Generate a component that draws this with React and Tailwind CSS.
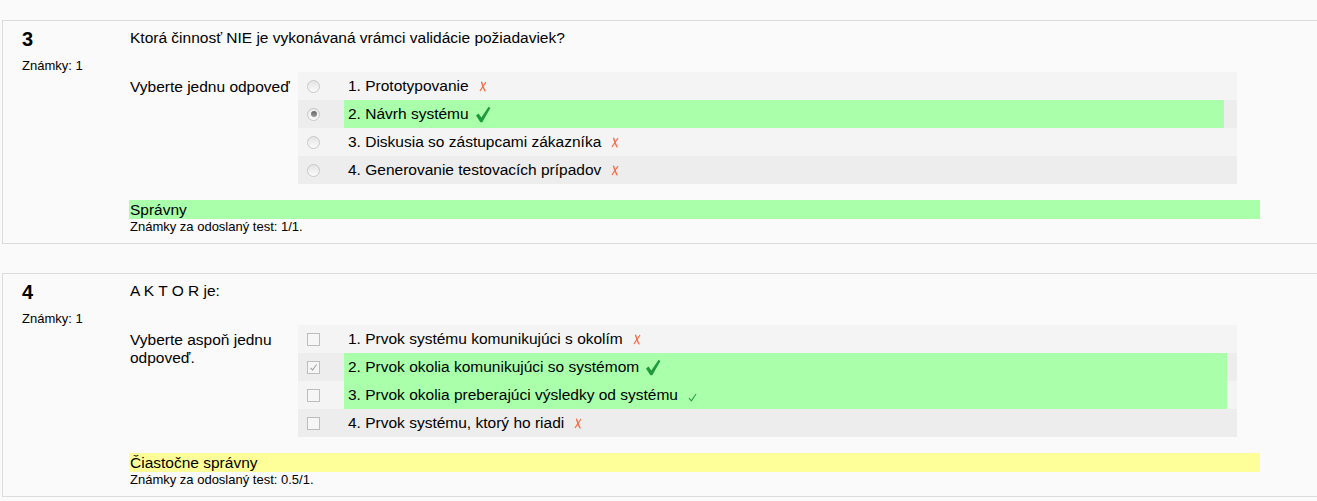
import React from "react";

const QUESTIONS = [
  {
    no: 3,
    marks: "1",
    text: "Ktorá činnosť NIE je vykonávaná vrámci validácie požiadaviek?",
    prompt: "Vyberte jednu odpoveď",
    type: "radio",
    highlightWidth: "w-[880px]",
    answers: [
      { label: "1. Prototypovanie", mark: "wrong" },
      { label: "2. Návrh systému", mark: "big", checked: true, correct: true },
      { label: "3. Diskusia so zástupcami zákazníka", mark: "wrong" },
      { label: "4. Generovanie testovacích prípadov", mark: "wrong" },
    ],
    state: "Správny",
    stateBg: "bg-[#aaffaa]",
    score: "Známky za odoslaný test: 1/1.",
  },
  {
    no: 4,
    marks: "1",
    text: "A K T O R je:",
    prompt: "Vyberte aspoň jednu odpoveď.",
    type: "checkbox",
    highlightWidth: "w-[883px]",
    answers: [
      { label: "1. Prvok systému komunikujúci s okolím", mark: "wrong" },
      { label: "2. Prvok okolia komunikujúci so systémom", mark: "big", checked: true, correct: true },
      { label: "3. Prvok okolia preberajúci výsledky od systému", mark: "small", correct: true },
      { label: "4. Prvok systému, ktorý ho riadi", mark: "wrong" },
    ],
    state: "Čiastočne správny",
    stateBg: "bg-[#ffff99]",
    score: "Známky za odoslaný test: 0.5/1.",
  },
];

function CrossMark() {
  return (
    <svg width="8" height="11" viewBox="0 0 8 11" className="ml-2.5 shrink-0">
      <path d="M2.6 1.2 C3.4 4 4.4 7.2 6 9.8" stroke="#f7704a" strokeWidth="1.4" fill="none" strokeLinecap="round" />
      <path d="M6.8 1.4 C5 4 3.2 6.6 1.2 9.6" stroke="#f7704a" strokeWidth="1.1" fill="none" strokeLinecap="round" />
    </svg>
  );
}

function BigTick() {
  return (
    <svg width="16" height="17" viewBox="0 0 16 17" className="ml-1.5 shrink-0">
      <path d="M1 9.5 L3.6 7.6 L6.3 11.6 L13.6 0.8 L15.4 2 L7.3 16.2 L5.4 16.2 Z" fill="#1d9b3c" />
    </svg>
  );
}

function SmallTick() {
  return (
    <svg width="9" height="9" viewBox="0 0 9 9" className="ml-2.5 mt-1 shrink-0">
      <path d="M1 5.2 L3.4 7.8 L8 1" stroke="#27a045" strokeWidth="1.1" fill="none" />
    </svg>
  );
}

function Radio({ checked }) {
  return (
    <span className="flex h-[13px] w-[13px] items-center justify-center rounded-full border border-[#c8c8c8] bg-gradient-to-b from-[#e4e4e4] to-[#fbfbfb]">
      {checked && (
        <span className="flex h-[9px] w-[9px] items-center justify-center rounded-full bg-[#f4f4f4]">
          <span className="h-[6px] w-[6px] rounded-full bg-gradient-to-b from-[#666] to-[#9a9a9a]" />
        </span>
      )}
    </span>
  );
}

function Checkbox({ checked }) {
  return (
    <span className="flex h-[13px] w-[13px] items-center justify-center border border-[#bdbdbd] bg-[#f6f6f6]">
      {checked && (
        <svg width="9" height="9" viewBox="0 0 9 9">
          <path d="M1.5 4.8 L3.6 7 L7.6 1.5" stroke="#a9a9a9" strokeWidth="1.2" fill="none" />
        </svg>
      )}
    </span>
  );
}

function Question({ q, last }) {
  return (
    <div
      className={`ml-[2px] w-[1340px] border border-[#dcdcdc] bg-[#fafafa] flex ${last ? "" : "mb-[29px]"}`}
    >
      <div className="w-[126px] shrink-0 pl-[19px] pt-[6px]">
        <div className="text-[20px] leading-[24px] font-bold">{q.no}</div>
        <div className="mt-[7px] text-[13px] leading-[16px]">Známky: {q.marks}</div>
      </div>
      <div className="flex-1 pt-[8px] pb-[8px]">
        <div className="text-[15.5px] leading-[18px] pl-px">{q.text}</div>
        <div className="mt-[25px] flex">
          <div className="w-[169px] shrink-0 pt-[6px] pl-px pr-[4px] text-[15.5px] leading-[18px]">{q.prompt}</div>
          <div className="w-[939px]">
            {q.answers.map((a, i) => (
              <div
                key={i}
                className={`flex h-[28px] items-center ${i % 2 === 0 ? "bg-[#f4f4f4]" : "bg-[#ededed]"}`}
              >
                <div className="w-[46px] shrink-0 pl-[9px]">
                  {q.type === "radio" ? <Radio checked={a.checked} /> : <Checkbox checked={a.checked} />}
                </div>
                <div
                  className={`flex h-full items-center pl-1 text-[15.5px] leading-[18px] ${
                    a.correct ? `bg-[#aaffaa] ${q.highlightWidth}` : ""
                  }`}
                >
                  <span>{a.label}</span>
                  {a.mark === "wrong" && <CrossMark />}
                  {a.mark === "big" && <BigTick />}
                  {a.mark === "small" && <SmallTick />}
                </div>
              </div>
            ))}
          </div>
        </div>
        <div className={`mt-[16px] w-[1131px] ${q.stateBg} text-[15.5px] leading-[19px] pl-px`}>{q.state}</div>
        <div className="text-[13px] leading-[16px] pl-px">{q.score}</div>
      </div>
    </div>
  );
}

export default function App() {
  return (
    <div
      className="min-h-[501px] w-full overflow-hidden bg-[#fafafa] pt-[20px] text-black"
      style={{ fontFamily: '"Liberation Sans", Arial, sans-serif' }}
    >
      {QUESTIONS.map((q, i) => (
        <Question key={q.no} q={q} last={i === QUESTIONS.length - 1} />
      ))}
    </div>
  );
}
